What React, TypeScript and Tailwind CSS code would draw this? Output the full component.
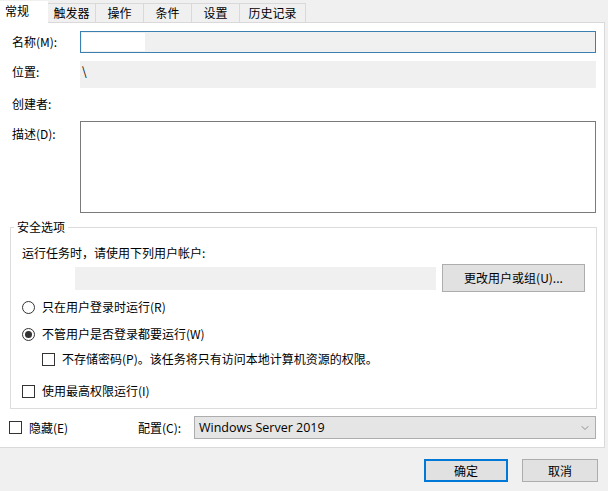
import { ChevronDown } from "lucide-react";

const FONT = "font-['Noto_Sans_CJK_SC','Microsoft_YaHei',sans-serif]";

const TABS = ["常规", "触发器", "操作", "条件", "设置", "历史记录"];

const Radio = ({ checked, label }: { checked?: boolean; label: string }) => (
    <div className="flex items-center gap-[7px] h-[16px]">
        <span className="w-[13px] h-[13px] rounded-full border border-[#333] bg-white flex items-center justify-center">
            {checked && <span className="w-[7px] h-[7px] rounded-full bg-[#333]" />}
        </span>
        <span>{label}</span>
    </div>
);

const Check = ({ label }: { label: string }) => (
    <div className="flex items-center gap-[7px] h-[16px]">
        <span className="w-[13px] h-[13px] border border-[#333] bg-white" />
        <span>{label}</span>
    </div>
);

export default function App() {
    return (
        <div className={`w-[608px] h-[491px] bg-[#f0f0f0] flex flex-col text-[12px] leading-[16px] text-black ${FONT}`}>
            {/* tab strip */}
            <div className="h-[22px] flex items-end relative z-10">
                {TABS.map((t, i) =>
                    i === 0 ? (
                        <div key={t} className="h-[22px] w-[48px] bg-white pl-[5px] pt-[2px] -mb-px">
                            {t}
                        </div>
                    ) : (
                        <div
                            key={t}
                            className={`h-[19px] border-t border-r border-[#d9d9d9] bg-[#f0f0f0] flex justify-center pt-[1px] ${
                                i === 5 ? "w-[66px]" : "w-[48px]"
                            }`}
                        >
                            {t}
                        </div>
                    )
                )}
            </div>

            {/* panel */}
            <div className="h-[426px] mr-[3px] bg-white border border-[#d9d9d9] border-l-0 flex flex-col pl-[12px] pr-[8px]">
                <div className="flex items-center mt-[8px] h-[22px]">
                    <span className="w-[68px]">名称(M):</span>
                    <div className="flex-1 h-[22px] border border-[#3c7fb1] bg-[#f0f0f0] flex p-px">
                        <div className="w-[63px] bg-white" />
                    </div>
                </div>

                <div className="flex mt-[8px] h-[27px]">
                    <span className="w-[68px] pt-[3px]">位置:</span>
                    <div className="flex-1 bg-[#f0f0f0] pl-[2px] pt-[2px]">\</div>
                </div>

                <div className="flex items-center mt-[8px] h-[16px]">
                    <span className="w-[68px]">创建者:</span>
                </div>

                <div className="flex mt-[9px] h-[92px]">
                    <span className="w-[68px] pt-[5px]">描述(D):</span>
                    <div className="flex-1 border border-[#7a7a7a] bg-white" />
                </div>

                <fieldset className="mt-[6px] -ml-[2px] h-[190px] border border-[#dcdcdc] px-[11px] flex flex-col">
                    <legend className="-ml-[8px] px-[3px]">安全选项</legend>
                    <div className="mt-[10px]">运行任务时，请使用下列用户帐户:</div>
                    <div className="flex items-center mt-[3px] h-[28px]">
                        <div className="w-[414px] h-[23px] bg-[#f0f0f0] flex">
                            <div className="w-[53px] bg-white" />
                        </div>
                        <button className="ml-[6px] w-[143px] h-[28px] bg-[#e1e1e1] border border-[#adadad] flex items-center justify-center">
                            更改用户或组(U)...
                        </button>
                    </div>
                    <div className="mt-[7px]">
                        <Radio label="只在用户登录时运行(R)" />
                    </div>
                    <div className="mt-[11px]">
                        <Radio checked label="不管用户是否登录都要运行(W)" />
                    </div>
                    <div className="mt-[9px] pl-[20px]">
                        <Check label="不存储密码(P)。该任务将只有访问本地计算机资源的权限。" />
                    </div>
                    <div className="mt-[16px]">
                        <Check label="使用最高权限运行(I)" />
                    </div>
                </fieldset>

                <div className="flex items-center mt-[7px] h-[23px] -ml-[3px]">
                    <div className="w-[129px]">
                        <Check label="隐藏(E)" />
                    </div>
                    <span className="w-[56px]">配置(C):</span>
                    <div className="flex-1 h-[23px] bg-[#e5e5e5] border border-[#adadad] flex items-center justify-between pl-[4px] pr-[4px] font-['Open_Sans',sans-serif] text-[12.5px]">
                        <span>Windows Server 2019</span>
                        <ChevronDown size={12} strokeWidth={1.2} className="text-[#555]" />
                    </div>
                </div>
            </div>

            {/* footer */}
            <div className="flex justify-end gap-[14px] pr-[10px] pt-[11px]">
                <button className="w-[84px] h-[23px] bg-[#e1e1e1] border-2 border-[#0078d7] flex items-center justify-center">
                    确定
                </button>
                <button className="w-[76px] h-[23px] bg-[#e1e1e1] border border-[#adadad] flex items-center justify-center">
                    取消
                </button>
            </div>
        </div>
    );
}
